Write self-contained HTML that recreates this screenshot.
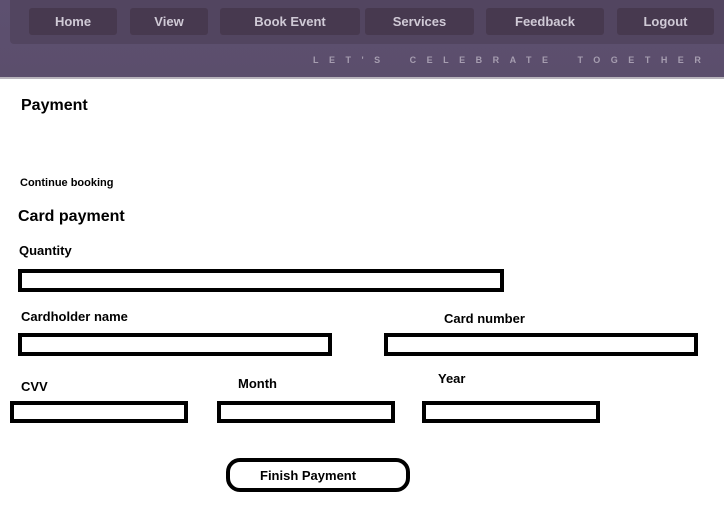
<!DOCTYPE html>
<html><head><style>
body{margin:0;width:724px;height:515px;background:#fff;position:relative;overflow:hidden;font-family:"Liberation Sans",sans-serif;font-weight:bold;color:#000}
.hdr{position:absolute;left:0;top:0;width:724px;height:77px;background:linear-gradient(#5d5070,#5b4e6c);border-bottom:2px solid #b8b4bc;overflow:hidden}
.nav{position:absolute;left:10px;top:0;width:714px;height:44px;background:#524560;border-radius:0 0 0 4px}
.b{position:absolute;top:8px;height:27px;background:#47394f;border-radius:3px;color:#d0cad6;font-size:13px;font-weight:bold;text-align:center;line-height:27px}
.tag{position:absolute;left:313px;top:55px;font-size:9px;letter-spacing:10.5px;word-spacing:6px;color:#a69db0;font-weight:bold;white-space:nowrap}
.t{position:absolute;white-space:nowrap}
.box{position:absolute;border:4px solid #000;box-sizing:border-box}
</style></head><body>
<div class="hdr"><div class="nav"></div>
<div class="b" style="left:29px;width:88px">Home</div>
<div class="b" style="left:130px;width:78px">View</div>
<div class="b" style="left:220px;width:140px">Book Event</div>
<div class="b" style="left:365px;width:109px">Services</div>
<div class="b" style="left:486px;width:118px">Feedback</div>
<div class="b" style="left:617px;width:97px">Logout</div>
<div class="tag">LET'S CELEBRATE TOGETHER</div>
</div>
<div class="t" style="left:21px;top:97px;font-size:16px">Payment</div>
<div class="t" style="left:20px;top:177px;font-size:11px">Continue booking</div>
<div class="t" style="left:18px;top:208px;font-size:16px">Card payment</div>
<div class="t" style="left:19px;top:243px;font-size:13px">Quantity</div>
<div class="box" style="left:18px;top:269px;width:486px;height:23px"></div>
<div class="t" style="left:21px;top:309px;font-size:13px">Cardholder name</div>
<div class="t" style="left:444px;top:311px;font-size:13px">Card number</div>
<div class="box" style="left:18px;top:333px;width:314px;height:23px"></div>
<div class="box" style="left:384px;top:333px;width:314px;height:23px"></div>
<div class="t" style="left:21px;top:379px;font-size:13px">CVV</div>
<div class="t" style="left:238px;top:376px;font-size:13px">Month</div>
<div class="t" style="left:438px;top:371px;font-size:13px">Year</div>
<div class="box" style="left:10px;top:401px;width:178px;height:22px"></div>
<div class="box" style="left:217px;top:401px;width:178px;height:22px"></div>
<div class="box" style="left:422px;top:401px;width:178px;height:22px"></div>
<div class="box" style="left:226px;top:458px;width:184px;height:34px;border-radius:14px"></div>
<div class="t" style="left:260px;top:468px;font-size:13px">Finish Payment</div>
</body></html>
